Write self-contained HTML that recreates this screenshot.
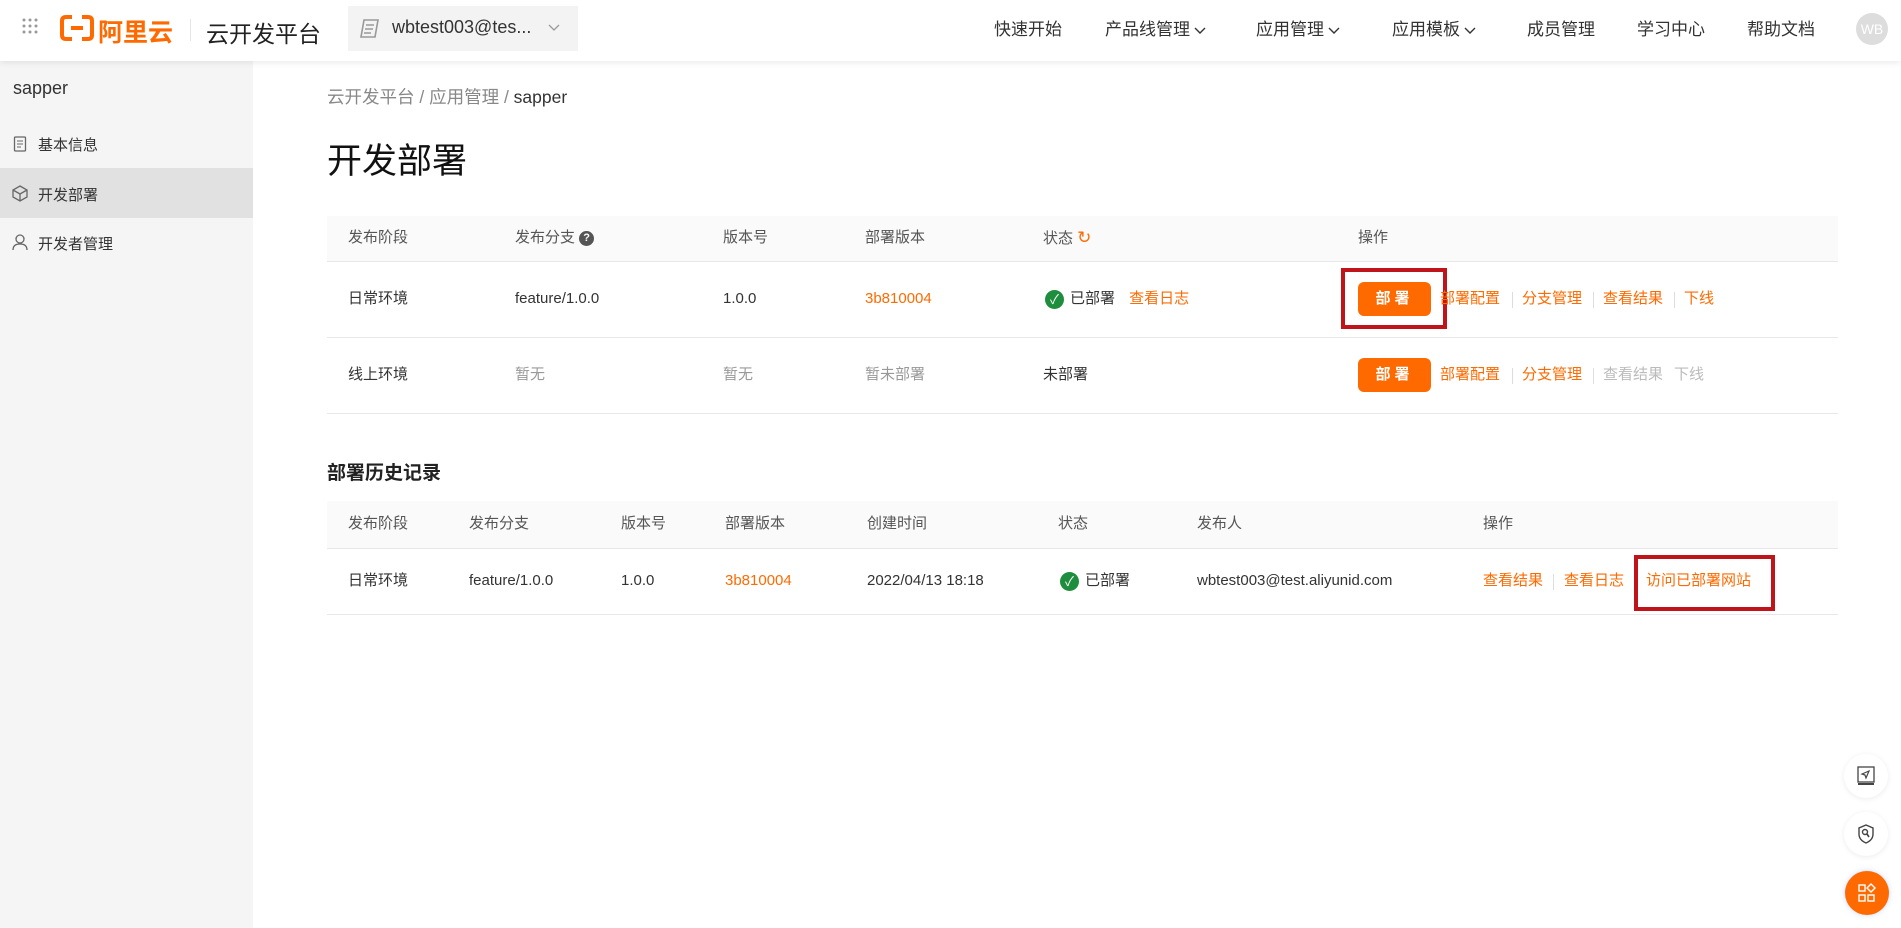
<!DOCTYPE html>
<html><head><meta charset="utf-8">
<style>
*{margin:0;padding:0;box-sizing:border-box}
body{width:1901px;height:928px;overflow:hidden;background:#fff;font-family:"Liberation Sans","Noto Sans CJK SC",sans-serif;color:#333;position:relative}
.a{position:absolute;white-space:nowrap}
.hdr{position:absolute;left:0;top:0;width:1901px;height:61px;background:#fff;box-shadow:0 2px 6px rgba(0,0,0,.08);z-index:2}
.side{position:absolute;left:0;top:61px;width:253px;height:867px;background:#f5f5f5}
.nav{font-size:17px;color:#333;top:18px;line-height:24px}
.o{color:#ff6a00}
.g{color:#999}
.th{background:#fafafa;position:absolute}
.line{position:absolute;height:1px;background:#e8e8e8}
.t{font-size:15px;line-height:22px}
.btn{position:absolute;background:#ff6a00;color:#fff;border-radius:6px;font-size:15px;font-weight:bold;text-align:center;line-height:33px;letter-spacing:4px}
.sep{position:absolute;width:1px;height:16px;background:#ddd}
.red{position:absolute;border:4px solid #c0141b}
.ok{display:inline-block;width:19px;height:19px;border-radius:50%;background:#1e8e3e;color:#fff;font-size:13px;text-align:center;line-height:19px;vertical-align:middle;margin-right:6px}
.fl{position:absolute;width:44px;height:44px;border-radius:50%;background:#fff;box-shadow:0 1px 6px rgba(0,0,0,.08)}
.chev{display:inline-block;vertical-align:middle;margin-left:4px}
</style></head><body>
<div class="hdr">
 <svg class="a" style="left:22px;top:18px" width="16" height="16"><g fill="#999"><circle cx="2" cy="2" r="1.5"/><circle cx="8" cy="2" r="1.5"/><circle cx="14" cy="2" r="1.5"/><circle cx="2" cy="8" r="1.5"/><circle cx="8" cy="8" r="1.5"/><circle cx="14" cy="8" r="1.5"/><circle cx="2" cy="14" r="1.5"/><circle cx="8" cy="14" r="1.5"/><circle cx="14" cy="14" r="1.5"/></g></svg>
 <svg class="a" style="left:60px;top:15px" width="34" height="26"><path d="M12 2H6Q2 2 2 6V20Q2 24 6 24H12M22 2H28Q32 2 32 6V20Q32 24 28 24H22M11 13H23" fill="none" stroke="#ff6a00" stroke-width="4"/></svg>
 <div class="a" style="left:98px;top:13px;font-size:25px;font-weight:bold;color:#ff6a00">阿里云</div>
 <div class="a" style="left:190px;top:19px;width:1px;height:22px;background:#e5e5e5"></div>
 <div class="a" style="left:206px;top:15px;font-size:23px;color:#222">云开发平台</div>
 <div class="a" style="left:348px;top:6px;width:230px;height:45px;background:#f3f3f3"></div>
 <svg class="a" style="left:359px;top:17px" width="22" height="24"><path d="M5 3H19L16 20H2ZM7 8H15M6 12H14M5 16H12" fill="none" stroke="#999" stroke-width="1.6"/></svg>
 <div class="a" style="left:392px;top:17px;font-size:18px;color:#333">wbtest003@tes...</div>
 <svg class="a" style="left:548px;top:24px" width="12" height="8"><path d="M1 1L6 6L11 1" fill="none" stroke="#999" stroke-width="1.3"/></svg>
 <div class="a nav" style="left:994px">快速开始</div>
 <div class="a nav" style="left:1105px">产品线管理<svg class="chev" width="12" height="8"><path d="M1 1L6 6L11 1" fill="none" stroke="#333" stroke-width="1.4"/></svg></div>
 <div class="a nav" style="left:1256px">应用管理<svg class="chev" width="12" height="8"><path d="M1 1L6 6L11 1" fill="none" stroke="#333" stroke-width="1.4"/></svg></div>
 <div class="a nav" style="left:1392px">应用模板<svg class="chev" width="12" height="8"><path d="M1 1L6 6L11 1" fill="none" stroke="#333" stroke-width="1.4"/></svg></div>
 <div class="a nav" style="left:1527px">成员管理</div>
 <div class="a nav" style="left:1637px">学习中心</div>
 <div class="a nav" style="left:1747px">帮助文档</div>
 <div class="a" style="left:1856px;top:13px;width:32px;height:32px;border-radius:50%;background:#ddd;color:#fff;font-size:14px;text-align:center;line-height:32px">WB</div>
</div>
<div class="side">
 <div class="a" style="left:13px;top:17px;font-size:18px;color:#333">sapper</div>
 <svg class="a" style="left:13px;top:74px" width="14" height="17"><rect x="1.5" y="2" width="11" height="14" rx="1" fill="none" stroke="#666" stroke-width="1.3"/><path d="M4 6H10M4 9H10M4 12H8" stroke="#666"/></svg>
 <div class="a" style="left:38px;top:73px;font-size:15px">基本信息</div>
 <div class="a" style="left:0;top:107px;width:253px;height:50px;background:#e1e1e1"></div>
 <svg class="a" style="left:12px;top:124px" width="16" height="17"><path d="M8 1L15 5V12L8 16L1 12V5ZM1 5L8 9L15 5M8 9V16" fill="none" stroke="#666" stroke-width="1.3"/></svg>
 <div class="a" style="left:38px;top:123px;font-size:15px">开发部署</div>
 <svg class="a" style="left:12px;top:173px" width="16" height="17"><circle cx="8" cy="5" r="4" fill="none" stroke="#666" stroke-width="1.3"/><path d="M1 16Q1 10 8 10Q15 10 15 16" fill="none" stroke="#666" stroke-width="1.3"/></svg>
 <div class="a" style="left:38px;top:172px;font-size:15px">开发者管理</div>
</div>
<div class="a" style="left:327px;top:84px;font-size:17.5px;color:#888">云开发平台 / 应用管理 / <span style="color:#333">sapper</span></div>
<div class="a" style="left:327px;top:133px;font-size:35px;color:#111">开发部署</div>

<div class="th" style="left:327px;top:216px;width:1511px;height:45px"></div>
<div class="line" style="left:327px;top:261px;width:1511px"></div>
<div class="line" style="left:327px;top:337px;width:1511px"></div>
<div class="line" style="left:327px;top:413px;width:1511px"></div>
<div class="a t" style="left:348px;top:227px;color:#555">发布阶段</div>
<div class="a t" style="left:515px;top:227px;color:#555">发布分支 <span style="display:inline-block;width:15px;height:15px;border-radius:50%;background:#555;color:#fff;font-size:11px;text-align:center;line-height:15px;font-weight:bold;vertical-align:middle">?</span></div>
<div class="a t" style="left:723px;top:227px;color:#555">版本号</div>
<div class="a t" style="left:865px;top:227px;color:#555">部署版本</div>
<div class="a t" style="left:1043px;top:227px;color:#555">状态 <span class="o" style="font-size:17px">↻</span></div>
<div class="a t" style="left:1358px;top:227px;color:#555">操作</div>

<div class="a t" style="left:348px;top:288px">日常环境</div>
<div class="a t" style="left:515px;top:288px">feature/1.0.0</div>
<div class="a t" style="left:723px;top:288px">1.0.0</div>
<div class="a t o" style="left:865px;top:288px">3b810004</div>
<div class="a t" style="left:1045px;top:288px"><span class="ok">✓</span>已部署 <span class="o" style="margin-left:10px">查看日志</span></div>
<div class="btn" style="left:1358px;top:282px;width:73px;height:34px">部署</div>
<div class="red" style="left:1341px;top:268px;width:106px;height:61px"></div>
<div class="a t o" style="left:1440px;top:288px">部署配置</div><div class="sep" style="left:1512px;top:292px"></div>
<div class="a t o" style="left:1522px;top:288px">分支管理</div><div class="sep" style="left:1593px;top:292px"></div>
<div class="a t o" style="left:1603px;top:288px">查看结果</div><div class="sep" style="left:1674px;top:292px"></div>
<div class="a t o" style="left:1684px;top:288px">下线</div>

<div class="a t" style="left:348px;top:364px">线上环境</div>
<div class="a t g" style="left:515px;top:364px">暂无</div>
<div class="a t g" style="left:723px;top:364px">暂无</div>
<div class="a t g" style="left:865px;top:364px">暂未部署</div>
<div class="a t" style="left:1043px;top:364px">未部署</div>
<div class="btn" style="left:1358px;top:358px;width:73px;height:34px">部署</div>
<div class="a t o" style="left:1440px;top:364px">部署配置</div><div class="sep" style="left:1512px;top:368px"></div>
<div class="a t o" style="left:1522px;top:364px">分支管理</div><div class="sep" style="left:1593px;top:368px"></div>
<div class="a t" style="left:1603px;top:364px;color:#bbb">查看结果</div>
<div class="a t" style="left:1674px;top:364px;color:#bbb">下线</div>

<div class="a" style="left:327px;top:458px;font-size:19px;font-weight:bold;color:#222">部署历史记录</div>
<div class="th" style="left:327px;top:501px;width:1511px;height:47px"></div>
<div class="line" style="left:327px;top:548px;width:1511px"></div>
<div class="line" style="left:327px;top:614px;width:1511px"></div>
<div class="a t" style="left:348px;top:513px;color:#555">发布阶段</div>
<div class="a t" style="left:469px;top:513px;color:#555">发布分支</div>
<div class="a t" style="left:621px;top:513px;color:#555">版本号</div>
<div class="a t" style="left:725px;top:513px;color:#555">部署版本</div>
<div class="a t" style="left:867px;top:513px;color:#555">创建时间</div>
<div class="a t" style="left:1058px;top:513px;color:#555">状态</div>
<div class="a t" style="left:1197px;top:513px;color:#555">发布人</div>
<div class="a t" style="left:1483px;top:513px;color:#555">操作</div>
<div class="a t" style="left:348px;top:570px">日常环境</div>
<div class="a t" style="left:469px;top:570px">feature/1.0.0</div>
<div class="a t" style="left:621px;top:570px">1.0.0</div>
<div class="a t o" style="left:725px;top:570px">3b810004</div>
<div class="a t" style="left:867px;top:570px">2022/04/13 18:18</div>
<div class="a t" style="left:1060px;top:570px"><span class="ok">✓</span>已部署</div>
<div class="a t" style="left:1197px;top:570px">wbtest003@test.aliyunid.com</div>
<div class="a t o" style="left:1483px;top:570px">查看结果</div><div class="sep" style="left:1553px;top:574px"></div>
<div class="a t o" style="left:1564px;top:570px">查看日志</div>
<div class="a t o" style="left:1646px;top:570px">访问已部署网站</div>
<div class="red" style="left:1634px;top:555px;width:141px;height:56px"></div>

<div class="fl" style="left:1844px;top:754px"><svg style="margin:11px" width="22" height="22"><rect x="3" y="2" width="16" height="15" fill="none" stroke="#444" stroke-width="1.3"/><path d="M3 19H19" stroke="#444" stroke-width="2"/><path d="M14 6L7 9L10 10L11 13Z" fill="none" stroke="#444" stroke-width="1.2"/></svg></div>
<div class="fl" style="left:1844px;top:812px"><svg style="margin:11px" width="22" height="22"><path d="M11 2L18 5V11Q18 17 11 20Q4 17 4 11V5Z" fill="none" stroke="#444" stroke-width="1.4"/><circle cx="10" cy="9" r="2.5" fill="none" stroke="#444" stroke-width="1.4"/><path d="M12 11L14 14" stroke="#444" stroke-width="1.6"/></svg></div>
<div class="fl" style="left:1845px;top:871px;background:#ff6a00;box-shadow:0 0 6px rgba(100,150,255,.35)"><svg style="margin:11px" width="22" height="22" fill="none" stroke="#fff" stroke-width="1.4"><rect x="3" y="3" width="6" height="6"/><path d="M15 2L19 6L15 10L11 6Z"/><rect x="3" y="13" width="6" height="6"/><rect x="12" y="13" width="6" height="6"/></svg></div>
</body></html>
